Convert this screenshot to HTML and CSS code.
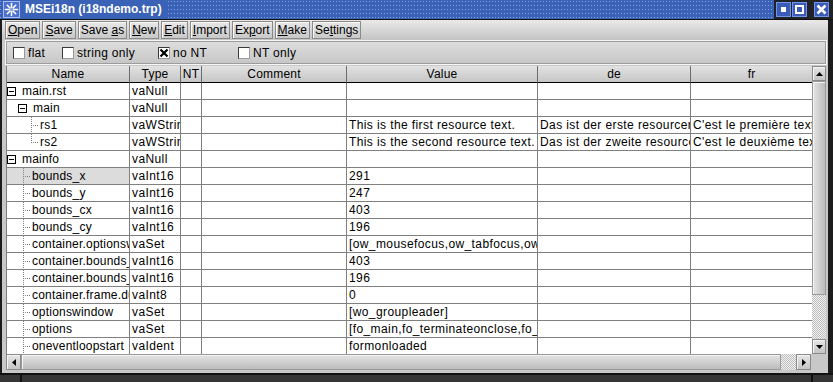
FILE: index.html
```html
<!DOCTYPE html>
<html lang="en">
<head>
    <meta charset="UTF-8">
    <title>MSEi18n</title>
    <link rel="stylesheet" href="styles.css">
</head>
<body>
<div class="window">
    <div class="titlebar">
        <svg class="app-icon" width="17" height="17" viewBox="0 0 17 17">
            <rect x="0.5" y="0.5" width="16" height="16" fill="#4b70cf" stroke="#a9bdf0"/>
            <g stroke="#ffffff" stroke-width="1.6" stroke-linecap="round">
                <line x1="8.5" y1="2.5" x2="8.5" y2="14.5"/>
                <line x1="2.5" y1="8.5" x2="14.5" y2="8.5"/>
                <line x1="4.3" y1="4.3" x2="12.7" y2="12.7"/>
                <line x1="12.7" y1="4.3" x2="4.3" y2="12.7"/>
            </g>
            <circle cx="8.5" cy="8.5" r="1.8" fill="#8fa3c8"/>
        </svg>
        <span class="title-text">MSEi18n (i18ndemo.trp)</span>
        <span class="title-fill"></span>
        <div class="title-buttons">
            <span class="wbtn wbtn-min"><i></i></span>
            <span class="wbtn wbtn-max"><i></i></span>
            <span class="wbtn wbtn-close">
                <svg width="11" height="11" viewBox="0 0 11 11">
                    <path d="M1.5 1.5 L9.5 9.5 M9.5 1.5 L1.5 9.5" stroke="#fff" stroke-width="2.6"/>
                </svg>
            </span>
        </div>
    </div>

    <div class="client">
        <div class="menubar">
            <button><u>O</u>pen</button>
            <button><u>S</u>ave</button>
            <button>Save <u>a</u>s</button>
            <button><u>N</u>ew</button>
            <button><u>E</u>dit</button>
            <button><u>I</u>mport</button>
            <button>Ex<u>p</u>ort</button>
            <button><u>M</u>ake</button>
            <button>Se<u>t</u>tings</button>
        </div>

        <div class="filterbar">
            <label class="check w-flat"><span class="box"></span>flat</label>
            <label class="check w-string"><span class="box"></span>string only</label>
            <label class="check w-nont">
                <span class="box">
                    <svg width="10" height="10" viewBox="0 0 10 10">
                        <path d="M1.5 1.5 L8.5 8.5 M8.5 1.5 L1.5 8.5" stroke="#000" stroke-width="2.2"/>
                    </svg>
                </span>no NT</label>
            <label class="check"><span class="box"></span>NT only</label>
        </div>

        <div class="gridwrap">
            <div class="gridmain">
                <div class="table">
                    <div class="row head">
                        <div class="cell">Name</div>
                        <div class="cell">Type</div>
                        <div class="cell">NT</div>
                        <div class="cell">Comment</div>
                        <div class="cell">Value</div>
                        <div class="cell">de</div>
                        <div class="cell">fr</div>
                    </div>
                    <div class="row">
                        <div class="cell name lvl0"><span class="toggle"></span>main.rst</div>
                        <div class="cell">vaNull</div>
                        <div class="cell"></div><div class="cell"></div><div class="cell"></div><div class="cell"></div><div class="cell"></div>
                    </div>
                    <div class="row">
                        <div class="cell name lvl1"><span class="toggle"></span>main</div>
                        <div class="cell">vaNull</div>
                        <div class="cell"></div><div class="cell"></div><div class="cell"></div><div class="cell"></div><div class="cell"></div>
                    </div>
                    <div class="row">
                        <div class="cell name leaf2"><span class="branch"></span>rs1</div>
                        <div class="cell">vaWString</div>
                        <div class="cell"></div><div class="cell"></div>
                        <div class="cell">This is the first resource text.</div>
                        <div class="cell">Das ist der erste resourcentext.</div>
                        <div class="cell">C'est le première texte de ressource.</div>
                    </div>
                    <div class="row">
                        <div class="cell name leaf2"><span class="branch last"></span>rs2</div>
                        <div class="cell">vaWString</div>
                        <div class="cell"></div><div class="cell"></div>
                        <div class="cell">This is the second resource text.</div>
                        <div class="cell">Das ist der zweite resourcentext.</div>
                        <div class="cell">C'est le deuxième texte de ressource.</div>
                    </div>
                    <div class="row">
                        <div class="cell name lvl0"><span class="toggle"></span>mainfo</div>
                        <div class="cell">vaNull</div>
                        <div class="cell"></div><div class="cell"></div><div class="cell"></div><div class="cell"></div><div class="cell"></div>
                    </div>
                    <div class="row">
                        <div class="cell name leaf1 selected"><span class="branch"></span>bounds_x</div>
                        <div class="cell">vaInt16</div>
                        <div class="cell"></div><div class="cell"></div>
                        <div class="cell">291</div>
                        <div class="cell"></div><div class="cell"></div>
                    </div>
                    <div class="row">
                        <div class="cell name leaf1"><span class="branch"></span>bounds_y</div>
                        <div class="cell">vaInt16</div>
                        <div class="cell"></div><div class="cell"></div>
                        <div class="cell">247</div>
                        <div class="cell"></div><div class="cell"></div>
                    </div>
                    <div class="row">
                        <div class="cell name leaf1"><span class="branch"></span>bounds_cx</div>
                        <div class="cell">vaInt16</div>
                        <div class="cell"></div><div class="cell"></div>
                        <div class="cell">403</div>
                        <div class="cell"></div><div class="cell"></div>
                    </div>
                    <div class="row">
                        <div class="cell name leaf1"><span class="branch"></span>bounds_cy</div>
                        <div class="cell">vaInt16</div>
                        <div class="cell"></div><div class="cell"></div>
                        <div class="cell">196</div>
                        <div class="cell"></div><div class="cell"></div>
                    </div>
                    <div class="row">
                        <div class="cell name leaf1"><span class="branch"></span>container.optionswidget</div>
                        <div class="cell">vaSet</div>
                        <div class="cell"></div><div class="cell"></div>
                        <div class="cell">[ow_mousefocus,ow_tabfocus,ow_arrowfocus]</div>
                        <div class="cell"></div><div class="cell"></div>
                    </div>
                    <div class="row">
                        <div class="cell name leaf1"><span class="branch"></span>container.bounds_cx</div>
                        <div class="cell">vaInt16</div>
                        <div class="cell"></div><div class="cell"></div>
                        <div class="cell">403</div>
                        <div class="cell"></div><div class="cell"></div>
                    </div>
                    <div class="row">
                        <div class="cell name leaf1"><span class="branch"></span>container.bounds_cy</div>
                        <div class="cell">vaInt16</div>
                        <div class="cell"></div><div class="cell"></div>
                        <div class="cell">196</div>
                        <div class="cell"></div><div class="cell"></div>
                    </div>
                    <div class="row">
                        <div class="cell name leaf1"><span class="branch"></span>container.frame.dummy</div>
                        <div class="cell">vaInt8</div>
                        <div class="cell"></div><div class="cell"></div>
                        <div class="cell">0</div>
                        <div class="cell"></div><div class="cell"></div>
                    </div>
                    <div class="row">
                        <div class="cell name leaf1"><span class="branch"></span>optionswindow</div>
                        <div class="cell">vaSet</div>
                        <div class="cell"></div><div class="cell"></div>
                        <div class="cell">[wo_groupleader]</div>
                        <div class="cell"></div><div class="cell"></div>
                    </div>
                    <div class="row">
                        <div class="cell name leaf1"><span class="branch"></span>options</div>
                        <div class="cell">vaSet</div>
                        <div class="cell"></div><div class="cell"></div>
                        <div class="cell">[fo_main,fo_terminateonclose,fo_autoreadstat]</div>
                        <div class="cell"></div><div class="cell"></div>
                    </div>
                    <div class="row">
                        <div class="cell name leaf1"><span class="branch"></span>oneventloopstart</div>
                        <div class="cell">vaIdent</div>
                        <div class="cell"></div><div class="cell"></div>
                        <div class="cell">formonloaded</div>
                        <div class="cell"></div><div class="cell"></div>
                    </div>
                </div>
                <div class="vscroll">
                    <span class="sbtn">
                        <svg width="7" height="4" viewBox="0 0 7 4"><polygon points="3.5,0 7,4 0,4" fill="#000"/></svg>
                    </span>
                    <span class="vthumb"></span>
                    <span class="track"></span>
                    <span class="sbtn">
                        <svg width="7" height="4" viewBox="0 0 7 4"><polygon points="0,0 7,0 3.5,4" fill="#000"/></svg>
                    </span>
                </div>
            </div>
            <div class="hscroll">
                <span class="sbtn">
                    <svg width="4" height="7" viewBox="0 0 4 7"><polygon points="0,3.5 4,0 4,7" fill="#000"/></svg>
                </span>
                <span class="hthumb"></span>
                <span class="track"></span>
                <span class="sbtn">
                    <svg width="4" height="7" viewBox="0 0 4 7"><polygon points="0,0 4,3.5 0,7" fill="#000"/></svg>
                </span>
                <span class="corner"></span>
            </div>
        </div>
    </div>

    <div class="statusbar">
        <span class="status-cell"></span>
        <span class="status-cell wide"></span>
        <span class="status-cell"></span>
    </div>
</div>
</body>
</html>
```

FILE: styles.css
```css
* {
    margin: 0;
    padding: 0;
    box-sizing: border-box;
}

html,
body {
    width: 100%;
    height: 100%;
    background-color: #1c1c1c;
}

body {
    font: 12px "Liberation Sans", Arial, Helvetica, sans-serif;
    color: #000;
    overflow: hidden;
}

.window {
    width: 833px;
    height: 382px;
    display: flex;
    flex-direction: column;
    background-color: #1c1c1c;
}

/* title bar */
.titlebar {
    height: 20px;
    display: flex;
    align-items: center;
    border-bottom: 1px solid #101010;
    background:
        linear-gradient(90deg, transparent 1px, #3a62b6 1px) 0 1px / 3px 4px,
        linear-gradient(#86a3e0 1px, transparent 1px) 0 1px / 3px 4px,
        #3a62b6;
}

.app-icon {
    margin-left: 3px;
    flex: none;
}

.title-text {
    height: 19px;
    line-height: 19px;
    padding: 0 5px;
    background-color: #3a62b6;
    color: #fff;
    font-weight: bold;
    font-size: 12px;
    white-space: nowrap;
}

.title-fill {
    flex: 1;
}

.title-buttons {
    height: 19px;
    display: flex;
    align-items: center;
    padding: 0 4px 0 2px;
    gap: 1px;
    background-color: #202226;
}

.wbtn {
    width: 15px;
    height: 15px;
    display: flex;
    align-items: center;
    justify-content: center;
    background-color: #3a5cb8;
    border: 1px solid #7396ec;
}

.wbtn-min i {
    width: 5px;
    height: 5px;
    background-color: #fff;
}

.wbtn-max i {
    width: 9px;
    height: 9px;
    border: 2px solid #fff;
}

.wbtn-close {
    margin-left: 6px;
}

/* client area */
.client {
    flex: 1;
    margin: 0 5px 0 2px;
    padding-bottom: 3px;
    display: flex;
    flex-direction: column;
    background-color: #c8c8c8;
}

.menubar {
    height: 20px;
    display: flex;
    gap: 2px;
    padding: 1px 0 1px 3px;
    background: linear-gradient(#e9e9e9, #c4c4c4);
}

.menubar button {
    height: 18px;
    padding: 0 2px;
    font: 12px "Liberation Sans", Arial, sans-serif;
    color: #000;
    border: 1px solid #8a8a8a;
    box-shadow: inset 1px 1px #fafafa;
    background: linear-gradient(#e8e8e8, #c8c8c8);
}

.menubar u {
    text-underline-offset: 1px;
}

.filterbar {
    height: 25px;
    margin: 0 1px 0 3px;
    padding-left: 7px;
    display: flex;
    align-items: center;
    border: 1px solid #f6f6f6;
    box-shadow: inset 0 0 0 1px #9c9c9c;
    background: linear-gradient(#dedede, #c6c6c6);
}

.check {
    display: flex;
    align-items: center;
    gap: 3px;
    letter-spacing: 0.3px;
}

.w-flat {
    width: 49px;
}

.w-string {
    width: 96px;
}

.w-nont {
    width: 80px;
}

.box {
    width: 12px;
    height: 12px;
    display: flex;
    align-items: center;
    justify-content: center;
    background-color: #fff;
    border: 1px solid #3a3a3a;
    border-right-color: #9a9a9a;
    border-bottom-color: #9a9a9a;
}

/* grid */
.gridwrap {
    flex: 1;
    margin: 1px 2px 0 4px;
    display: flex;
    flex-direction: column;
}

.gridmain {
    height: 288px;
    display: flex;
}

.table {
    flex: 1;
    overflow: hidden;
    background-color: #fff;
    border-left: 1px solid #808080;
}

.row {
    height: 17px;
    display: grid;
    grid-template-columns: 123px 51px 21px 145px 191px 153px 1fr;
}

.cell {
    height: 17px;
    padding-left: 2px;
    line-height: 16px;
    white-space: nowrap;
    overflow: hidden;
    letter-spacing: 0.4px;
    border-right: 1px solid #808080;
    border-bottom: 1px solid #808080;
}

.row .cell:last-child {
    border-right: none;
}

.head .cell {
    padding: 0;
    text-align: center;
    letter-spacing: 0.2px;
    border-right-color: #6c6c6c;
    border-bottom-color: #000;
    background: linear-gradient(#e2e2e2, #c6c6c6);
}

.name {
    display: flex;
    align-items: flex-start;
    letter-spacing: 0.2px;
}

.selected {
    background-color: #dcdcdc;
}

.toggle {
    flex: none;
    width: 9px;
    height: 9px;
    margin-top: 4px;
    border: 1px solid #000;
    background: linear-gradient(#000, #000) center / 5px 1px no-repeat, #fff;
}

.lvl0 {
    padding-left: 0;
    gap: 6px;
}

.lvl1 {
    padding-left: 11px;
    gap: 6px;
}

.leaf1 {
    padding-left: 16px;
    gap: 1px;
}

.leaf2 {
    padding-left: 24px;
    gap: 1px;
}

.branch {
    flex: none;
    width: 8px;
    height: 16px;
    background:
        repeating-linear-gradient(#808080 0 1px, transparent 1px 2px) 0 0 / 1px 100% no-repeat,
        repeating-linear-gradient(90deg, #808080 0 1px, transparent 1px 2px) 0 8px / 100% 1px no-repeat;
}

.branch.last {
    background:
        repeating-linear-gradient(#808080 0 1px, transparent 1px 2px) 0 0 / 1px 9px no-repeat,
        repeating-linear-gradient(90deg, #808080 0 1px, transparent 1px 2px) 0 8px / 100% 1px no-repeat;
}

/* scrollbars */
.sbtn {
    flex: none;
    width: 14px;
    height: 16px;
    display: flex;
    align-items: center;
    justify-content: center;
    border: 1px solid #8a8a8a;
    box-shadow: inset 1px 1px #f4f4f4;
    background: linear-gradient(#e6e6e6, #c4c4c4);
}

.track {
    flex: none;
    background: repeating-conic-gradient(#bdbdbd 0 25%, #f2f2f2 0 50%) 0 0 / 2px 2px;
}

.vscroll {
    width: 14px;
    display: flex;
    flex-direction: column;
    background-color: #c8c8c8;
}

.vscroll .sbtn {
    height: 15px;
}

.vthumb {
    flex: 1;
    border: 1px solid #9a9a9a;
    box-shadow: inset 1px 1px #f4f4f4;
    background: linear-gradient(90deg, #e4e4e4, #bcbcbc);
}

.vscroll .track {
    height: 44px;
}

.hscroll {
    height: 16px;
    display: flex;
}

.hscroll .sbtn {
    width: 15px;
}

.hthumb {
    flex: 1;
    border: 1px solid #9a9a9a;
    box-shadow: inset 1px 1px #f4f4f4;
    background: linear-gradient(#e4e4e4, #bcbcbc);
}

.hscroll .track {
    width: 15px;
}

.corner {
    width: 15px;
    background-color: #c8c8c8;
}

/* bottom frame */
.statusbar {
    height: 9px;
    display: flex;
    gap: 2px;
    padding-top: 2px;
    background-color: #111;
}

.status-cell {
    width: 20px;
    background-color: #353535;
}

.status-cell.wide {
    flex: 1;
}
```
